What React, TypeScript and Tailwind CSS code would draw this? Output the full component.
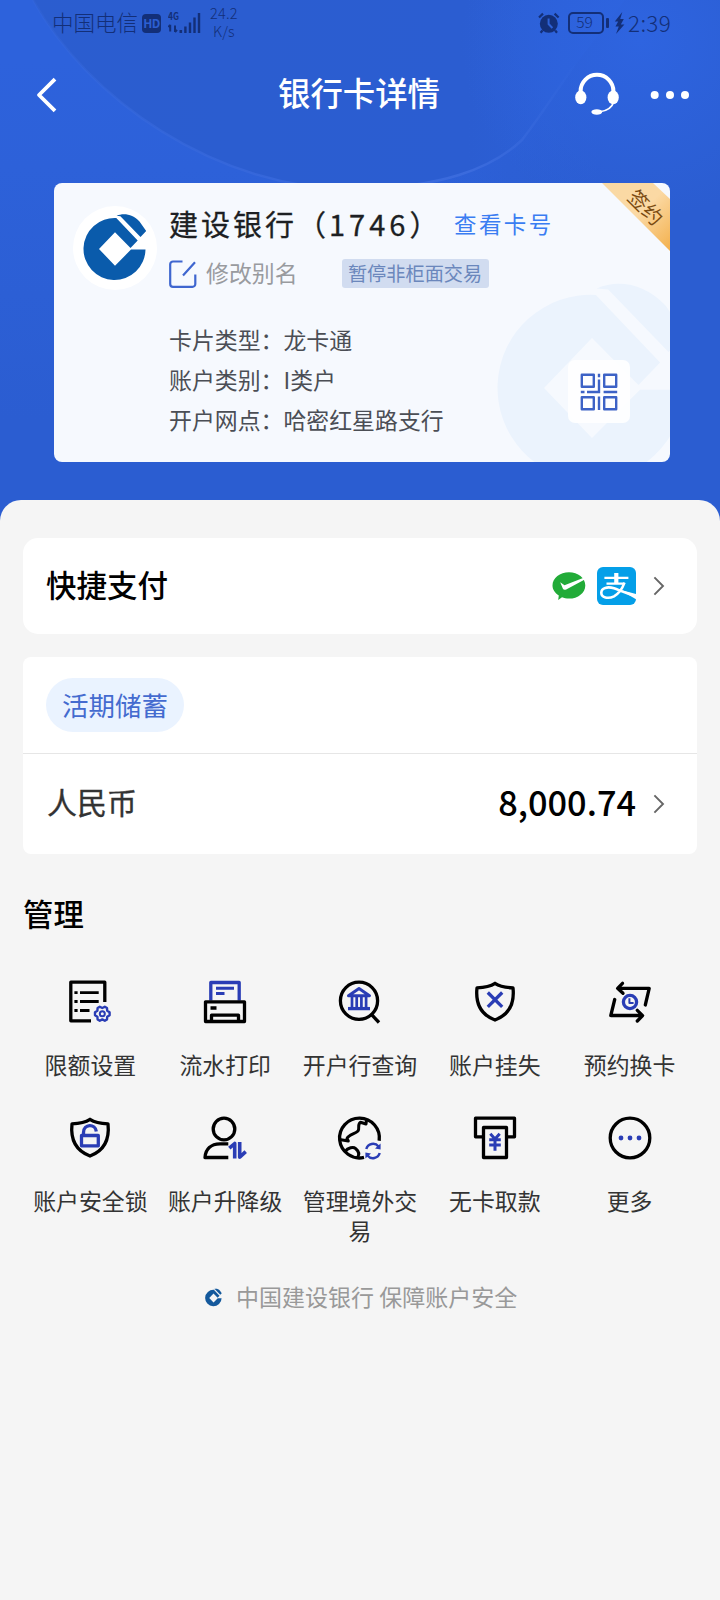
import type { ReactNode } from "react";

const BLUE = "#2a3db5";

function BankMark({ className }: { className?: string }) {
  return (
    <svg viewBox="-32 -36 64 68" className={className} fill="currentColor">
      <path d="M30.5 .6A31 31 0 1 1 1.3 -31L22.7 -8.5L15.5 -1L0 -16.7L-16 0L0 16.7L16 .6Z" />
      <path d="M1.6 -33.2C9 -36.5 18 -34.5 24.5 -27.5L31.2 -18L25.5 -12L5.4 -32.8Z" />
    </svg>
  );
}

function StatusBar() {
  return (
    <div className="relative flex h-[46px] items-center pl-[52px] pr-[49px] text-[#132f78]">
      <span className="-mt-[2px] text-[21.5px] font-light leading-[30px]">中国电信</span>
      <span className="ml-[4px] flex h-[19px] w-[19px] items-center justify-center rounded-[4px] bg-[#132f78] text-[12px] font-bold leading-none tracking-[-0.5px] text-[#2c5fd2]">
        HD
      </span>
      <svg className="-mt-[6px] ml-[7px]" width="33" height="28" viewBox="0 -6 33 28" fill="currentColor">
        <text x="0" y="8" fontSize="10.5" fontWeight="700" textLength="11" lengthAdjust="spacingAndGlyphs">4G</text>
        <path d="M2.2 12.8V19.6M7 13.5V20M2.2 13L.4 15.2M7 20L9 17.8" stroke="currentColor" strokeWidth="2" fill="none" />
        <path d="M11.5 18h2.6v3h-2.6zM16.2 14.5h2.4v6.5h-2.4zM20.8 10.5h2.4v10.5h-2.4zM25.3 5.5h2.4V21h-2.4zM29.8 1h2.4v20h-2.4z" />
      </svg>
      <span className="-mt-[2px] ml-[9px] flex flex-col items-center text-[14.5px] font-light leading-[18px] tracking-[0.2px]">
        <span>24.2</span>
        <span>K/s</span>
      </span>
      <svg className="ml-auto" width="22" height="22" viewBox="0 0 22 22" fill="currentColor">
        <circle cx="10.8" cy="11.8" r="9" />
        <path d="M1 5.5L5 1.6M20.6 5.5L16.6 1.6M4.5 18.5L2.6 20.8M17.2 18.5L19 20.8" stroke="currentColor" strokeWidth="2.2" />
        <path d="M10.6 6.6V12L14.4 16" stroke="#2d61d6" strokeWidth="2" fill="none" />
      </svg>
      <span className="ml-[8px] flex h-[22px] w-[36px] items-center justify-center rounded-[5px] border-2 border-[#132f78] pb-[2px] pr-[3px] text-[15.5px] font-light leading-none">59</span>
      <span className="ml-[2px] h-[10px] w-[3px] rounded-[1px] bg-[#132f78]" />
      <svg className="ml-[5px]" width="11" height="22" viewBox="0 0 11 22" fill="currentColor">
        <path d="M8.3 0L.8 9.5H4.2L1.5 14.5H4.8L2 22L10.4 12.4H6.8L9.8 7H6.2Z" />
      </svg>
      <span className="-mt-[2px] ml-[3px] text-[22.5px] font-light leading-[30px] tracking-[0.3px]">2:39</span>
    </div>
  );
}

function NavBar() {
  return (
    <div className="relative flex h-[94px] items-center text-white">
      <svg className="ml-[35px] mt-[4px]" width="22" height="36" viewBox="0 0 22 36" fill="none" stroke="currentColor" strokeWidth="3.8">
        <path d="M20 2.2L4 18L20 33.8" strokeLinejoin="round" />
      </svg>
      <h1 className="-mt-[2px] flex-1 pl-[103px] text-center text-[32.4px] font-medium leading-[40px]">银行卡详情</h1>
      <svg className="ml-[16px] mt-[2px]" width="46" height="46" viewBox="0 0 46 46" fill="currentColor">
        <path d="M6.6 23V20.2A16.4 16.4 0 0 1 39.4 20.2V23" fill="none" stroke="currentColor" strokeWidth="4" />
        <ellipse cx="6.8" cy="26.4" rx="5.6" ry="6.8" />
        <ellipse cx="39.2" cy="26.4" rx="5.6" ry="6.8" />
        <path d="M39.5 31C38 38 32 40 25 41" fill="none" stroke="currentColor" strokeWidth="1.6" />
        <ellipse cx="22.8" cy="41" rx="5.4" ry="2.7" />
      </svg>
      <svg className="ml-[29px] mr-[29px] mt-[2px]" width="42" height="10" viewBox="0 0 42 10" fill="currentColor">
        <circle cx="5.7" cy="6" r="4" />
        <circle cx="21" cy="6" r="4" />
        <circle cx="36" cy="6" r="4" />
      </svg>
    </div>
  );
}

function InfoRow({ label, value }: { label: string; value: string }) {
  return (
    <div className="flex h-10 items-center text-[22.9px] text-[#4b4e55]">
      <span>{label}：</span>
      <span>{value}</span>
    </div>
  );
}

function BankCard() {
  return (
    <section className="relative ml-[54px] mt-[43px] flex h-[279px] w-[616px] overflow-hidden rounded-[8px] bg-[#f6f9fe]">
      <BankMark className="absolute left-[442px] top-[97px] h-[204px] w-[192px] text-[#ebf3fd]" />
      <div className="relative ml-[19px] mt-[23px] flex h-[84px] w-[84px] shrink-0 items-center justify-center rounded-full bg-white">
        <BankMark className="mt-[-2px] h-[68px] w-[64px] text-[#0a5bab]" />
      </div>
      <div className="relative ml-[12px] flex flex-col">
        <div className="mt-[21px] flex h-10 items-center">
          <h2 className="whitespace-nowrap text-[29px] tracking-[3px] text-[#1d1f23] [-webkit-text-stroke:0.3px]">
            建设银行（<span className="tracking-[4px]">1746</span>）
          </h2>
        </div>
        <div className="mt-[11px] flex h-[37px] items-center">
          <svg width="28" height="28" viewBox="0 0 28 28" fill="none" stroke="#3f66cf" strokeWidth="2.2">
            <path d="M13.5 1.5H4A2.8 2.8 0 0 0 1.2 4.3V24A2.8 2.8 0 0 0 4 26.8H23.5A2.8 2.8 0 0 0 26.3 24V14.5M26 2.2L14 15.5" />
          </svg>
          <span className="-mt-[2px] ml-[9px] text-[22.9px] text-[#999b9f]">修改别名</span>
          <span className="ml-[44px] flex h-[29px] w-[147px] items-center justify-center whitespace-nowrap rounded-[3px] bg-[#d1dcf0] text-[19.2px] text-[#6b87bc]">
            暂停非柜面交易
          </span>
        </div>
        <div className="mt-[27px] flex flex-col">
          <InfoRow label="卡片类型" value="龙卡通" />
          <InfoRow label="账户类别" value="I类户" />
          <InfoRow label="开户网点" value="哈密红星路支行" />
        </div>
      </div>
      <a className="absolute left-[400px] top-[23px] whitespace-nowrap text-[22.5px] leading-[34px] tracking-[2.4px] text-[#3a7df2]">查看卡号</a>
      <div className="absolute right-0 top-0 h-[68px] w-[68px]">
        <svg className="absolute inset-0" width="68" height="68" viewBox="0 0 68 68">
          <defs>
            <linearGradient id="ribbon" x1="0" y1="0" x2="1" y2="1">
              <stop offset="0" stopColor="#f9d9a4" />
              <stop offset=".5" stopColor="#fbd9a4" />
              <stop offset="1" stopColor="#f3b04c" />
            </linearGradient>
          </defs>
          <path d="M0 0H51L68 16V68Z" fill="url(#ribbon)" />
        </svg>
        <span className="absolute left-[24px] top-[14px] rotate-45 whitespace-nowrap text-[20px] leading-[20px] text-[#7a4a10]">签约</span>
      </div>
      <div className="absolute left-[514px] top-[177px] flex h-[63px] w-[62px] items-center justify-center rounded-[7px] bg-white/90">
        <svg width="38" height="38" viewBox="0 0 38 38" fill="none" stroke="#3d62c6" strokeWidth="2.4">
          <path d="M1.8 1.8H13.8V13.8H1.8ZM24.2 1.8H36.2V13.8H24.2ZM1.8 24.2H13.8V36.2H1.8ZM24.2 24.2H36.2V36.2H24.2Z" strokeLinejoin="round" />
          <path d="M19 .7V4.2M19 6.500V19H7M4.5 19H.8M23.6 19H37.2M19 23.5V37" />
        </svg>
      </div>
    </section>
  );
}

function Chevron() {
  return (
    <svg width="12" height="20" viewBox="0 0 12 20" fill="none" stroke="#666" strokeWidth="1.9">
      <path d="M1.4 1.4L10 10L1.4 18.6" />
    </svg>
  );
}

function WeChatPay() {
  return (
    <svg width="34" height="30" viewBox="0 0 34 30">
      <path d="M17 1.2C26 1.2 33.3 7 33.3 14.4S26 27.6 17 27.6C14.4 27.6 12 27 10 26.2L6.2 29L6.8 24.4C3 22 .5 18.4 .5 14.4C.5 7 8 1.2 17 1.2Z" fill="#22ab38" />
      <path d="M8.2 11.3L12.5 14.2L32.3 6.6L32.8 8.6L14.2 18.4C12.700 19.2 11.500 19 10.800 17.600Z" fill="#fff" />
    </svg>
  );
}

function Alipay() {
  return (
    <svg width="39" height="38" viewBox="0 0 39 38" fill="none" stroke="#fff">
      <rect width="39" height="38" rx="6" fill="#049fe8" stroke="none" />
      <path d="M7.4 10.8H31.4M9.5 16.600H27.500" strokeWidth="2.2" />
      <path d="M19.3 6V16.5" strokeWidth="4.2" />
      <path d="M27.5 15.6C25 22.5 21 27 17 29.3C11 32.3 4.3 30.5 4.3 25.7C4.3 20.8 10.5 19.3 17 21.3C22 23 27 25.6 39 29.3" strokeWidth="2.6" />
      <path d="M23 22.8L39 27V32.2Z" fill="#fff" stroke="none" />
    </svg>
  );
}

const SHIELD = "M24 5.3C29 8.6 36 9.6 42 9.9C43.5 24 40 36 24 42C8 36 4.5 24 6 9.9C12 9.6 19 8.6 24 5.3Z";

const actions: { label: string; icon: ReactNode }[] = [
  {
    label: "限额设置",
    icon: (
      <>
        <path d="M25 42.8H4.8V4.2H38.8V24" />
        <path d="M8.4 14.7H11.600M8.400 23.500H11.600M8.400 32.500H11.600M14 14.700H32.700M14 23.500H32.700M14 32.500H23.500" strokeWidth="2.8" />
        <path
          d="M33.8 28.7L36.3 30L38.8 28.7L41 30L41.2 32.7L43.6 34.2V37.2L41.2 38.7L41 41.4L38.8 42.7L36.3 41.4L33.8 42.7L31.6 41.4L31.4 38.7L29 37.2V34.2L31.4 32.7L31.6 30Z"
          stroke={BLUE}
          strokeWidth="2.4"
        />
        <circle cx="36.3" cy="35.7" r="2.5" stroke={BLUE} strokeWidth="2" />
      </>
    ),
  },
  {
    label: "流水打印",
    icon: (
      <>
        <path d="M9.8 22.5V4.5H38.2V22.5" stroke={BLUE} />
        <path d="M15 10.3H33M15 15.5H23.5" stroke={BLUE} strokeWidth="3" />
        <rect x="4.5" y="23.8" width="39" height="19.7" />
        <path d="M9.5 30H15.5M10.5 43.500V37.200H37.500V43.500" />
      </>
    ),
  },
  {
    label: "开户行查询",
    icon: (
      <>
        <circle cx="23" cy="22.7" r="18.6" />
        <path d="M35.5 36.5L43 44.5" />
        <path d="M23 10.5L33.5 17.7H12.5Z" stroke={BLUE} strokeWidth="3" />
        <path d="M16 18.5V30.500M20.700 18.500V30.500M25.400 18.500V30.500M30.100 18.500V30.500" stroke={BLUE} strokeWidth="2.7" />
        <path d="M12 30.6H34" stroke={BLUE} />
      </>
    ),
  },
  {
    label: "账户挂失",
    icon: (
      <>
        <path d={SHIELD} />
        <path d="M16.8 14.5L31.2 28.9M31.2 14.5L16.8 28.9" stroke={BLUE} />
      </>
    ),
  },
  {
    label: "预约换卡",
    icon: (
      <>
        <path d="M16.5 5.3L11.6 10.3L17 15.3M12 10.3H43.2L39.3 27" strokeLinecap="round" />
        <path d="M8.7 21.5L4.8 37.5H36.3M31.3 32.3L36.6 37.6L31.3 43" strokeLinecap="round" />
        <circle cx="24" cy="24" r="6.6" stroke={BLUE} />
        <path d="M23.4 20.2V25H27.6" stroke={BLUE} strokeWidth="2" />
      </>
    ),
  },
  {
    label: "账户安全锁",
    icon: (
      <>
        <path d={SHIELD} />
        <rect x="15.5" y="21.5" width="16.800" height="10.300" stroke={BLUE} />
        <path d="M17.5 21V18.5C17.5 9.5 29.5 9.5 30.3 17.5" stroke={BLUE} />
      </>
    ),
  },
  {
    label: "账户升降级",
    icon: (
      <>
        <circle cx="23" cy="15" r="10.8" />
        <path d="M27.3 29.8H19C10 30 4.5 35 4 43.500H27.300" />
        <path d="M28.300 34.200L33.700 29.500V44.500M38.700 28V43.300L44.700 37.600" stroke={BLUE} strokeWidth="3.600" />
      </>
    ),
  },
  {
    label: "管理境外交易",
    icon: (
      <>
        <path d="M28 43.4A19.9 19.9 0 1 1 43.2 26.7" />
        <path d="M3.5 25.5L12.3 27L11 24.5C12.5 20.5 19 20 22 17C24 14 21 10.5 24.500 8.200L30 10L30.500 6" strokeWidth="3" />
        <path d="M9 37.5C12 33.5 17.5 32.5 19.5 34.5C22.5 37 24 40 21.5 43.5" strokeWidth="3" />
        <path d="M30.3 35A7 7 0 0 1 42.5 32.5M43.7 39A7 7 0 0 1 31.5 41.5" stroke={BLUE} strokeWidth="2.5" />
        <path d="M44.6 29.5V35.5L39 34.5ZM29.4 44.5V38.5L35 39.5Z" fill={BLUE} stroke="none" />
      </>
    ),
  },
  {
    label: "无卡取款",
    icon: (
      <>
        <path d="M12 22.8H4.500V4.200H43.500V22.800H36" />
        <rect x="12.5" y="13.5" width="23" height="30" />
        <path d="M19.3 19.8L24 25L28.700 19.800M24 25V36.700M18.200 25.800H29.800M18.200 31H29.800" stroke={BLUE} strokeWidth="3" />
      </>
    ),
  },
  {
    label: "更多",
    icon: (
      <>
        <circle cx="24" cy="24" r="19.8" />
        <g fill={BLUE} stroke="none">
          <circle cx="15" cy="24" r="2.4" />
          <circle cx="24" cy="24" r="2.4" />
          <circle cx="33" cy="24" r="2.4" />
        </g>
      </>
    ),
  },
];

export default function App() {
  return (
    <main className="relative flex h-[1600px] w-[720px] flex-col overflow-hidden bg-[#2b5dd1] font-['Noto_Sans_CJK_SC','Noto_Sans',sans-serif]">
      <svg className="absolute left-0 top-0" width="720" height="520" viewBox="0 0 720 520">
        <defs>
          <linearGradient id="outer" gradientUnits="userSpaceOnUse" x1="0" y1="60" x2="0" y2="420">
            <stop offset="0" stopColor="#2d62dc" />
            <stop offset=".3" stopColor="#2d61d9" />
            <stop offset="1" stopColor="#2b5dd1" />
          </linearGradient>
          <linearGradient id="shade" gradientUnits="userSpaceOnUse" x1="420" y1="0" x2="600" y2="0">
            <stop offset="0" stopColor="#2b5dd1" stopOpacity="0" />
            <stop offset="1" stopColor="#2b5dd1" />
          </linearGradient>
          <linearGradient id="inner" gradientUnits="userSpaceOnUse" x1="0" y1="0" x2="720" y2="0">
            <stop offset="0" stopColor="#2b5dcf" />
            <stop offset=".65" stopColor="#2b5dd1" />
            <stop offset=".78" stopColor="#2c60d7" />
            <stop offset="1" stopColor="#2c61da" />
          </linearGradient>
          <radialGradient id="glow" gradientUnits="userSpaceOnUse" cx="640" cy="40" r="180">
            <stop offset="0" stopColor="#2e64e0" />
            <stop offset="1" stopColor="#2e64e0" stopOpacity="0" />
          </radialGradient>
          <linearGradient id="rim" gradientUnits="userSpaceOnUse" x1="33" y1="0" x2="580" y2="0">
            <stop offset="0" stopColor="#3b6de0" stopOpacity=".2" />
            <stop offset=".35" stopColor="#3768dc" stopOpacity=".8" />
            <stop offset=".8" stopColor="#3b6bdd" />
            <stop offset="1" stopColor="#3b6de0" stopOpacity="0" />
          </linearGradient>
        </defs>
        <path d="M0 0H720V520H0Z" fill="url(#outer)" />
        <path d="M360 0H720V520H360Z" fill="url(#shade)" />
        <path d="M33 0C85 95 215 192 360 189C440 187 490 170 522 140C540 118 552 100 572 70C590 45 610 20 625 0Z" fill="url(#inner)" />
        <path d="M400 0H720V240H400Z" fill="url(#glow)" />
        <path d="M33 0C85 95 215 192 360 189C440 187 490 170 522 140C545 110 560 85 575 65" fill="none" stroke="url(#rim)" strokeWidth="2.5" />
      </svg>
      <StatusBar />
      <NavBar />
      <BankCard />

      <div className="relative mt-[38px] flex flex-1 flex-col rounded-t-[21px] bg-[#f5f5f5] px-[23px] pt-[38px]">
        <section className="flex h-[96px] items-center rounded-[15px] bg-white pl-[23px] pr-[32px]">
          <span className="-mt-[2px] text-[30.5px] font-medium text-black">快捷支付</span>
          <span className="ml-auto flex items-center gap-[11px]">
            <WeChatPay />
            <Alipay />
          </span>
          <span className="ml-[17px]"><Chevron /></span>
        </section>

        <section className="mt-[23px] flex h-[197px] flex-col rounded-[8px] bg-white">
          <div className="flex h-[97px] items-center border-b border-[#e6e6e6] pl-[23px]">
            <span className="flex h-[54px] w-[138px] items-center justify-center rounded-full bg-[#eaf3ff] text-[26.5px] text-[#446bcf]">活期储蓄</span>
          </div>
          <div className="flex flex-1 items-center pl-[24px] pr-[32px]">
            <span className="-mt-[5px] text-[30px] text-[#333] [-webkit-text-stroke:0.3px]">人民币</span>
            <span className="-mt-[4px] ml-auto text-[34.3px] font-medium text-black">8,000.74</span>
            <span className="ml-[17px]"><Chevron /></span>
          </div>
        </section>

        <h3 className="mt-[39px] text-[30.4px] font-medium leading-[40px] text-black">管理</h3>

        <div className="mt-[45px] grid grid-cols-5 gap-y-[34px]">
          {actions.map((a) => (
            <div key={a.label} className="flex flex-col items-center">
              <svg width="48" height="48" viewBox="0 0 48 48" fill="none" stroke="#000" strokeWidth="3.3" strokeLinejoin="round">
                {a.icon}
              </svg>
              <span className="mt-[23px] w-[118px] pb-px text-center text-[22.9px] leading-[30px] text-[#333]">{a.label}</span>
            </div>
          ))}
        </div>

        <footer className="mt-[35px] flex h-[30px] items-center pl-[182px] text-[23px] text-[#999]">
          <BankMark className="mt-[3px] h-[19px] w-[17px] text-[#14599c]" />
          <span className="ml-[14px] whitespace-nowrap">中国建设银行 保障账户安全</span>
        </footer>
      </div>
    </main>
  );
}
